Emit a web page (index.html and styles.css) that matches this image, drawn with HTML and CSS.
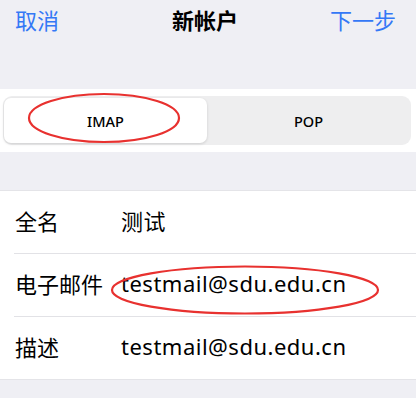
FILE: index.html
```html
<!DOCTYPE html>
<html lang="zh-CN">
<head>
  <meta charset="UTF-8">
  <title>新帐户</title>
  <meta name="viewport" content="width=device-width, initial-scale=1.0">
  <link rel="stylesheet" href="styles.css">
</head>
<body>
  <div class="screen">
    <div class="nav">
      <span class="nav-btn">取消</span>
      <span class="nav-title">新帐户</span>
      <span class="nav-btn">下一步</span>
    </div>
    <div class="seg-band">
      <div class="seg">
        <div class="seg-item active">IMAP</div>
        <div class="seg-item">POP</div>
      </div>
    </div>
    <div class="form">
      <div class="row"><span class="label">全名</span><span class="value">测试</span></div>
      <div class="row"><span class="label">电子邮件</span><span class="value">testmail@sdu.edu.cn</span></div>
      <div class="row"><span class="label">描述</span><span class="value">testmail@sdu.edu.cn</span></div>
    </div>
    <svg class="marks" width="416" height="398" viewBox="0 0 416 398" fill="none" stroke="#e8312f" stroke-width="2.2">
      <ellipse cx="104" cy="118" rx="75" ry="24"/>
      <ellipse cx="245" cy="290" rx="133" ry="23.5"/>
    </svg>
  </div>
</body>
</html>
```

FILE: styles.css
```css
html,body {margin:0; padding:0;}
body {
  background:#efeff4;
  font-family:"Noto Sans","Noto Sans CJK SC",sans-serif;
  color:#000;
}
.screen {position:relative; width:416px; height:398px; overflow:hidden;}
.nav {
  height:37px; padding:0 20px 0 15px;
  display:flex; align-items:center; justify-content:space-between;
  margin-bottom:52px;
}
.nav-btn {color:#3478f6; font-size:22px;}
.nav-title {font-size:22px; font-weight:700; margin-left:21px;}

.seg-band {background:#fff; height:63px; padding:7px 5px 0 3px; box-sizing:border-box;}
.seg {
  height:49px; background:#eeeeef; border-radius:9px;
  display:flex; padding:2px 1px; box-sizing:border-box;
}
.seg-item {
  flex:1; display:flex; align-items:center; justify-content:center;
  font-size:14.5px; font-weight:500; border-radius:7px;
}
.seg-item.active {background:#fff; box-shadow:0 1px 3px rgba(0,0,0,0.14);}

.form {
  margin-top:38px; background:#fff;
  border-top:1px solid #e4e4e8; border-bottom:1px solid #e4e4e8;
}
.row {
  height:63px; display:flex; align-items:center; padding:0 0 4px 15px;
  font-size:22px; box-sizing:border-box;
}
.row:first-child {height:62px;}
.row + .row {border-top:1px solid #e2e2e6; margin-left:14px; padding-left:1px;}
.label {width:106px; flex:none;}
.value {white-space:nowrap; letter-spacing:0.5px;}
.marks {position:absolute; left:0; top:0; pointer-events:none;}
```
